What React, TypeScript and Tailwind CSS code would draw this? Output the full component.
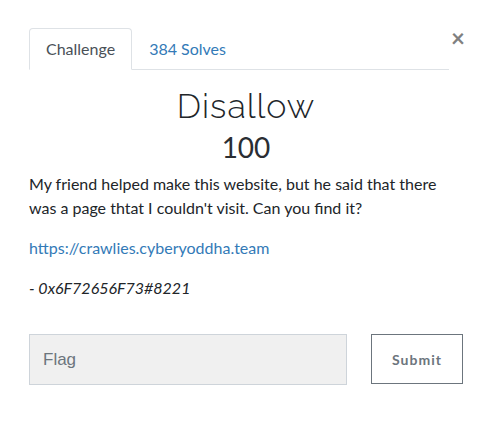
import React from "react";

export default function App() {
  return (
    <div className="min-h-[427px] w-[487px] bg-white font-['Lato','Noto_Sans',sans-serif] text-[#212529]">
      <div className="pl-[29px] pr-[24px] pt-[28px]">
        <div className="flex items-start">
          <nav className="flex flex-1 border-b border-[#dee2e6]">
            <div className="-mb-px rounded-t-[4px] border border-[#dee2e6] border-b-white bg-white px-[16px] py-[8px] text-[16px] leading-[24px] text-[#495057]">
              Challenge
            </div>
            <div className="-mb-px border border-transparent px-[16px] py-[8px] text-[16px] leading-[24px] text-[#337ab7]">
              384 Solves
            </div>
          </nav>
          <button
            type="button"
            className="-mt-[2px] ml-[2px] w-[12px] text-[24px] font-bold leading-[24px] text-[#808080]"
          >
            ×
          </button>
        </div>

        <div className="pt-[16px] text-center">
          <h3 className="font-['Raleway','Lato',sans-serif] text-[34px] font-light leading-[40px] tracking-[1px] text-[#212529]">
            Disallow
          </h3>
          <h4 className="mt-[4px] text-[28px] font-normal leading-[34px] text-[#2a2e33]">100</h4>
        </div>

        <div className="pt-[8px] text-[16px] leading-[24px]">
          <p className="mb-[16px]">
            My friend helped make this website, but he said that there was a page thtat I couldn't visit. Can you find it?
          </p>
          <p className="mb-[16px]">
            <a className="text-[#337ab7]">https://crawlies.cyberyoddha.team</a>
          </p>
          <p className="italic">- 0x6F72656F73#8221</p>
        </div>

        <div className="mt-[34px] flex items-start gap-[24px]">
          <input
            type="text"
            placeholder="Flag"
            className="h-[51px] w-[318px] border border-[#ced4da] bg-[#f0f0f0] px-[13px] font-['Liberation_Sans',Arial,sans-serif] text-[17px] text-[#495057] placeholder:text-[#6c757d]"
          />
          <button
            type="button"
            className="h-[50px] w-[92px] border border-[#6c757d] bg-white text-[14px] font-bold tracking-[1px] text-[#6c757d]"
          >
            Submit
          </button>
        </div>
      </div>
    </div>
  );
}
